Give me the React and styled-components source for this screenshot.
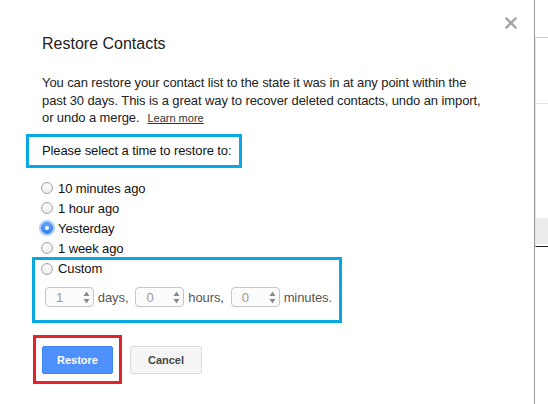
import React from "react";
import styled, { createGlobalStyle } from "styled-components";

const GlobalStyle = createGlobalStyle`
  html, body {
    margin: 0;
    padding: 0;
    background: #ffffff;
  }
  body {
    font-family: "Liberation Sans", Arial, Helvetica, sans-serif;
    color: #222;
  }
`;

const options = ["10 minutes ago", "1 hour ago", "Yesterday", "1 week ago"];

function Spinner({ value }) {
  return (
    <SpinBox>
      <span>{value}</span>
      <svg width="7" height="13" viewBox="0 0 7 13">
        <path d="M3.5 0.5 L6.5 5 L0.5 5 Z" fill="#8a8a8a" />
        <path d="M3.5 12.5 L6.5 8 L0.5 8 Z" fill="#8a8a8a" />
      </svg>
    </SpinBox>
  );
}

export default function App() {
  return (
    <Page>
      <GlobalStyle />
      <Dialog>
        <CloseButton aria-label="Close">
          <svg width="12" height="12" viewBox="0 0 12 12">
            <path d="M1.5 1.5 L10.5 10.5 M10.5 1.5 L1.5 10.5" stroke="#a6a6a6" strokeWidth="2.4" strokeLinecap="square" />
          </svg>
        </CloseButton>
        <Title>Restore Contacts</Title>
        <Intro>
          You can restore your contact list to the state it was in at any point within the
          <br />
          past 30 days. This is a great way to recover deleted contacts, undo an import,
          <br />
          or undo a merge.
          <LearnMore href="#">Learn more</LearnMore>
        </Intro>

        <Prompt>Please select a time to restore to:</Prompt>

        <Options>
          {options.map((label) => (
            <Option key={label}>
              <Radio $checked={label === "Yesterday"} />
              {label}
            </Option>
          ))}
        </Options>

        <CustomBox>
          <Option $height={17}>
            <Radio />
            Custom
          </Option>
          <SpinRow>
            <Spinner value="1" />
            <Unit>days,</Unit>
            <Spinner value="0" />
            <Unit>hours,</Unit>
            <Spinner value="0" />
            <Unit>minutes.</Unit>
          </SpinRow>
        </CustomBox>

        <Actions>
          <RedBox>
            <PrimaryButton>Restore</PrimaryButton>
          </RedBox>
          <Button>Cancel</Button>
        </Actions>
      </Dialog>

      <Backdrop>
        <Panel>
          <PanelRow $h={66} />
          <PanelRow $h={114} $plain />
          <PanelShade />
          <PanelRow $h={2} $plain />
        </Panel>
      </Backdrop>
    </Page>
  );
}

const Page = styled.div`
  display: flex;
  width: 548px;
  height: 404px;
  overflow: hidden;
`;

const Dialog = styled.div`
  position: relative;
  box-sizing: border-box;
  width: 535px;
  height: 404px;
  padding: 34px 0 0 42px;
  border-right: 1px solid #9c9c9c;
  background: #fff;
`;

const CloseButton = styled.button`
  position: absolute;
  top: 17px;
  right: 17px;
  width: 12px;
  height: 12px;
  padding: 0;
  border: none;
  background: none;
  cursor: pointer;
  svg {
    display: block;
  }
`;

const Title = styled.h2`
  margin: 0;
  font-size: 16px;
  font-weight: normal;
  line-height: 20px;
  color: #222;
`;

const Intro = styled.p`
  margin: 20px 0 0;
  font-size: 13px;
  letter-spacing: -0.1px;
  line-height: 17.5px;
  color: #222;
  white-space: nowrap;
`;

const LearnMore = styled.a`
  margin-left: 8px;
  font-size: 11px;
  letter-spacing: 0;
  color: #333;
  text-decoration: underline;
`;

const Prompt = styled.div`
  box-sizing: border-box;
  width: 216px;
  height: 34px;
  margin: 6.5px 0 0 -16px;
  padding-left: 13px;
  border: 3px solid #08a8e6;
  font-size: 13px;
  letter-spacing: -0.1px;
  line-height: 28px;
  white-space: nowrap;
  color: #111;
`;

const Options = styled.div`
  margin-top: 10px;
`;

const Option = styled.label`
  display: flex;
  align-items: center;
  gap: 5px;
  height: ${(p) => p.$height || 20}px;
  font-size: 13px;
  letter-spacing: -0.1px;
  color: #111;
`;

const Radio = styled.span`
  box-sizing: border-box;
  width: 12px;
  height: 12px;
  margin-left: -1px;
  border-radius: 50%;
  flex: none;
  position: relative;
  border: 1px solid ${(p) => (p.$checked ? "#3a7fe6" : "#a4a4a4")};
  background: ${(p) =>
    p.$checked
      ? "linear-gradient(#6aa8fb, #2f7ff0)"
      : "linear-gradient(#ffffff, #ececec)"};
  box-shadow: ${(p) =>
    p.$checked ? "0 0 0 2px rgba(110, 165, 250, 0.55)" : "inset 0 1px 1px rgba(0,0,0,0.06)"};
  &::after {
    content: "";
    display: ${(p) => (p.$checked ? "block" : "none")};
    position: absolute;
    left: 3px;
    top: 3px;
    width: 4px;
    height: 4px;
    border-radius: 50%;
    background: #fff;
  }
`;

const CustomBox = styled.div`
  box-sizing: border-box;
  width: 310px;
  margin: -1px 0 0 -10px;
  padding: 0 0 13px 7px;
  border: 3px solid #08a8e6;
`;

const SpinRow = styled.div`
  display: flex;
  align-items: center;
  margin: 10px 0 0 3px;
  height: 20px;
`;

const SpinBox = styled.div`
  box-sizing: border-box;
  display: flex;
  align-items: center;
  justify-content: space-between;
  width: 49px;
  height: 20px;
  padding: 0 3px 0 10px;
  border: 1px solid #c6c6c6;
  border-radius: 4px;
  background: #fbfbfb;
  font-size: 13px;
  color: #9a9a9a;
  svg {
    display: block;
  }
`;

const Unit = styled.span`
  margin: 0 7px 0 4px;
  font-size: 13px;
  letter-spacing: -0.1px;
  color: #555;
`;

const Actions = styled.div`
  display: flex;
  align-items: center;
  margin: 12px 0 0 -9px;
`;

const RedBox = styled.div`
  padding: 8px 6px 7px;
  border: 3px solid #e52229;
`;

const Button = styled.button`
  box-sizing: border-box;
  width: 72px;
  height: 28px;
  margin-left: 8px;
  padding: 0;
  border: 1px solid #dcdcdc;
  border-radius: 2px;
  background: #f5f5f5;
  font-family: "Liberation Sans", Arial, sans-serif;
  font-size: 11px;
  font-weight: bold;
  color: #444;
  cursor: pointer;
`;

const PrimaryButton = styled(Button)`
  display: block;
  width: 71px;
  margin-left: 0;
  border-color: #3f86f5;
  background: #4d90fe;
  color: #fff;
`;

const Backdrop = styled.div`
  flex: 1;
  background: #fff;
`;

const Panel = styled.div`
  margin-top: 37px;
  border-top: 1px solid #cfcfcf;
  border-left: 1px solid #e4e4e4;
  border-bottom: 1px solid #222;
`;

const PanelRow = styled.div`
  height: ${(p) => p.$h}px;
  border-bottom: ${(p) => (p.$plain ? "none" : "1px solid #e2e2e2")};
  box-sizing: border-box;
`;

const PanelShade = styled.div`
  height: 26px;
  background: #ececec;
`;
